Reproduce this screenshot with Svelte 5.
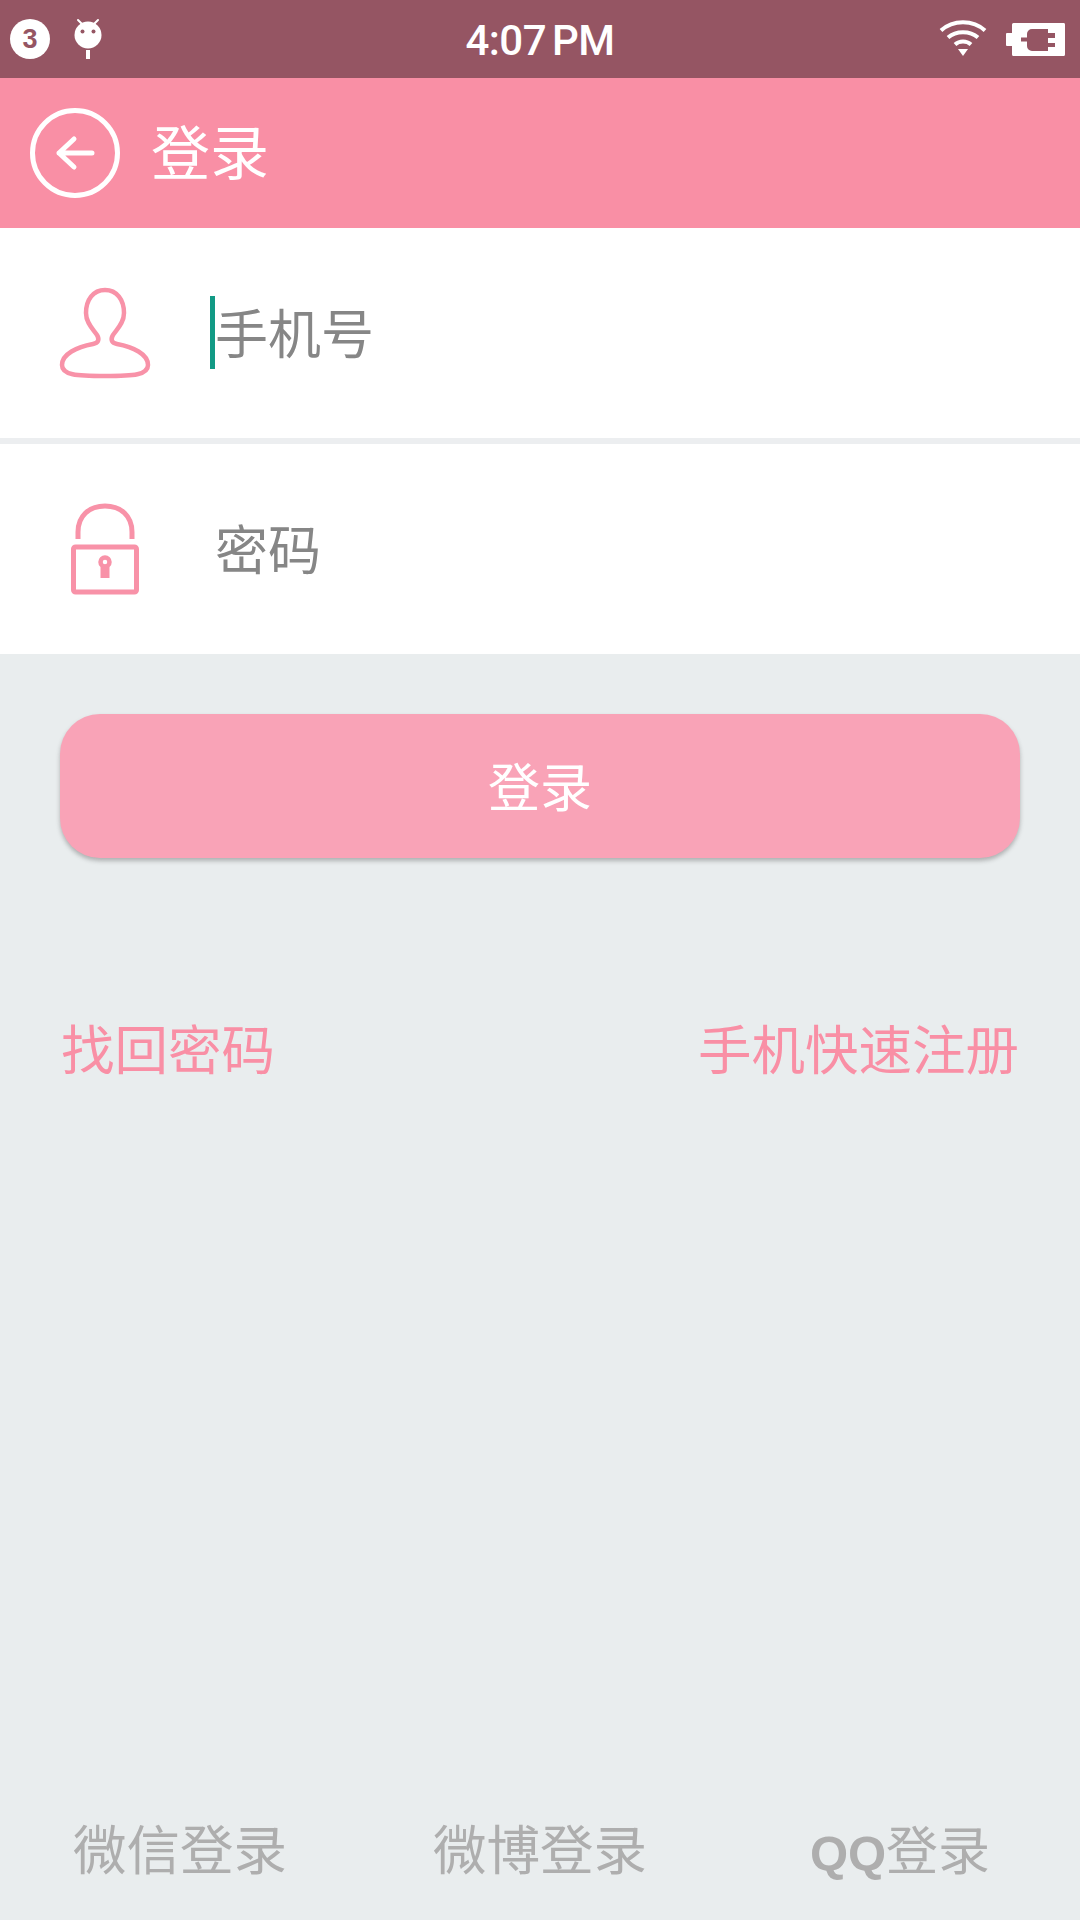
<script>
  let phone = $state('');
  let password = $state('');

  const socials = [
    { label: '微信登录' },
    { label: '微博登录' },
    { prefix: 'QQ', label: '登录' }
  ];
</script>

<div class="page">
  <div class="status-bar">
    <div class="status-left">
      <span class="badge">3</span>
      <svg class="bug" width="30" height="42" viewBox="0 0 30 42">
        <path d="M5 2l6 6M25 2l-6 6" stroke="#fff" stroke-width="2" stroke-linecap="round" />
        <circle cx="15" cy="17" r="13.500" fill="#fff" />
        <circle cx="9.500" cy="13.500" r="2" fill="#955563" />
        <circle cx="20.500" cy="13.500" r="2" fill="#955563" />
        <rect x="13" y="32" width="4" height="9" fill="#fff" />
      </svg>
    </div>
    <span class="clock">4:07<span class="ampm">PM</span></span>
    <div class="status-right">
      <svg width="48" height="38" viewBox="0 0 48 38" fill="none" stroke="#fff" stroke-width="4">
        <path d="M2 10.500C14 -0.500 34 -0.500 46 10.500" />
        <path d="M9 17.500C17 10.500 31 10.500 39 17.500" />
        <path d="M16 24.500C20.500 20.500 27.500 20.500 32 24.500" />
        <path d="M19 29h10l-5 7z" fill="#fff" stroke="none" />
      </svg>
      <svg width="59" height="33" viewBox="0 0 59 33">
        <path d="M0 11a1 1 0 0 1 1-1h5V1.500A1.500 1.500 0 0 1 7.500 0h50A1.500 1.500 0 0 1 59 1.500v30a1.500 1.500 0 0 1-1.500 1.500h-50A1.500 1.500 0 0 1 6 31.500V23H1a1 1 0 0 1-1-1z" fill="#fff" />
        <path d="M15 14.500h6V11a5 5 0 0 1 5-5h16v4h7v5h-7v5h7v4h-7v4H26a5 5 0 0 1-5-5v-4.500h-6z" fill="#955563" />
      </svg>
    </div>
  </div>

  <header class="app-bar">
    <button class="back" aria-label="返回">
      <svg width="90" height="90" viewBox="0 0 90 90" fill="none" stroke="#fff" stroke-linecap="round" stroke-linejoin="round">
        <circle cx="45" cy="45" r="42.500" stroke-width="5" />
        <path d="M62 45H29M44 31L29 45l15 14" stroke-width="5" />
      </svg>
    </button>
    <h1>登录</h1>
  </header>

  <div class="form">
    <label class="field">
      <svg class="field-icon" width="92" height="92" viewBox="0 0 92 92" fill="none" stroke="#f892a8" stroke-width="4.500">
        <path d="M46 3C34 3 27 13 27 26c0 10 7 16 11 22 3 5 1 8-4 9C18 60 3 67 3 78c0 10 14 11 43 11s43-1 43-11c0-11-15-18-31-21-5-1-7-4-4-9 4-6 11-12 11-22C65 13 58 3 46 3z" />
      </svg>
      <span class="caret"></span>
      <input type="text" placeholder="手机号" bind:value={phone} />
    </label>
    <div class="divider"></div>
    <label class="field">
      <svg class="field-icon" width="92" height="92" viewBox="0 0 92 92" fill="none" stroke="#f892a8" stroke-width="5">
        <path d="M19 36V29C19 13 30 3 46 3s27 10 27 26v7" />
        <rect x="14.500" y="44" width="63" height="45" rx="2" />
        <circle cx="46" cy="59" r="4.500" stroke-width="4.500" />
        <path d="M46 64v11" stroke-width="9" />
      </svg>
      <input type="password" placeholder="密码" bind:value={password} />
    </label>
  </div>

  <button class="submit">登录</button>

  <div class="links">
    <span>找回密码</span>
    <span>手机快速注册</span>
  </div>

  <div class="socials">
    {#each socials as item}
      <span class="social">{#if item.prefix}<b>{item.prefix}</b><i>{item.label}</i>{:else}{item.label}{/if}</span>
    {/each}
  </div>
</div>

<style>
  :global(body) {
    margin: 0;
    background: #e9edee;
  }

  .page {
    width: 1080px;
    height: 1920px;
    display: flex;
    flex-direction: column;
    background: #e9edee;
    font-family: "Noto Sans CJK SC", "Liberation Sans", sans-serif;
    font-weight: 400;
  }

  .status-bar {
    height: 78px;
    flex: none;
    background: #955563;
    display: grid;
    grid-template-columns: 1fr auto 1fr;
    align-items: center;
    color: #fff;
  }

  .status-left {
    display: flex;
    align-items: center;
    gap: 23px;
    padding-left: 10px;
  }

  .badge {
    width: 40px;
    height: 40px;
    border-radius: 50%;
    background: #fff;
    color: #955563;
    font: 700 27px/40px "Liberation Sans", sans-serif;
    text-align: center;
  }

  .clock {
    font: 500 42px/1 Roboto, sans-serif;
    letter-spacing: -0.5px;
    padding-top: 4px;
  }

  .ampm {
    margin-left: 6px;
  }

  .status-right {
    display: flex;
    align-items: center;
    justify-content: flex-end;
    gap: 19px;
    padding-right: 15px;
  }

  .app-bar {
    height: 150px;
    flex: none;
    background: #f98fa5;
    display: flex;
    align-items: center;
    gap: 31px;
    padding-left: 30px;
  }

  .back {
    width: 90px;
    height: 90px;
    padding: 0;
    border: 0;
    background: none;
    display: block;
  }

  .back svg {
    display: block;
  }

  h1 {
    margin: 0 0 8px;
    color: #fff;
    font-size: 59px;
    font-weight: 400;
    line-height: 1;
  }

  .form {
    background: #fff;
    flex: none;
  }

  .field {
    height: 210px;
    display: flex;
    align-items: center;
    padding-left: 59px;
  }

  .field-icon {
    flex: none;
    margin-right: 64px;
  }

  .caret {
    width: 5px;
    height: 73px;
    background: #129a85;
    margin-right: -5px;
    margin-bottom: 2px;
    flex: none;
    position: relative;
    left: -5px;
  }

  .divider {
    height: 6px;
    background: #eceef0;
  }

  input {
    flex: 1;
    min-width: 0;
    border: 0;
    outline: 0;
    padding: 0 0 5px;
    background: none;
    font-family: inherit;
    font-weight: 400;
    font-size: 53px;
    color: #7f7f7f;
  }

  input::placeholder {
    color: #868686;
    opacity: 1;
  }

  .submit {
    flex: none;
    height: 144px;
    margin: 60px 60px 0;
    padding: 0 0 4px;
    border: 0;
    border-radius: 40px;
    background: #f9a3b7;
    color: #fff;
    font-family: inherit;
    font-weight: 400;
    font-size: 52px;
    box-shadow: 0 3px 4px rgba(90, 90, 90, 0.4);
  }

  .links {
    flex: none;
    display: flex;
    justify-content: space-between;
    margin-top: 152px;
    padding: 0 61px;
    color: #f98fa5;
    font-size: 53.500px;
    line-height: 74px;
  }

  .socials {
    margin-top: auto;
    display: grid;
    grid-template-columns: repeat(3, 1fr);
    padding: 0 0 30px;
    color: #aeaeae;
    font-size: 53.500px;
    line-height: 74px;
    text-align: center;
  }

  .social b {
    font-family: "Liberation Sans", sans-serif;
    font-size: 49px;
    font-weight: 700;
  }

  .social i {
    font-style: normal;
    font-size: 52px;
  }
</style>
